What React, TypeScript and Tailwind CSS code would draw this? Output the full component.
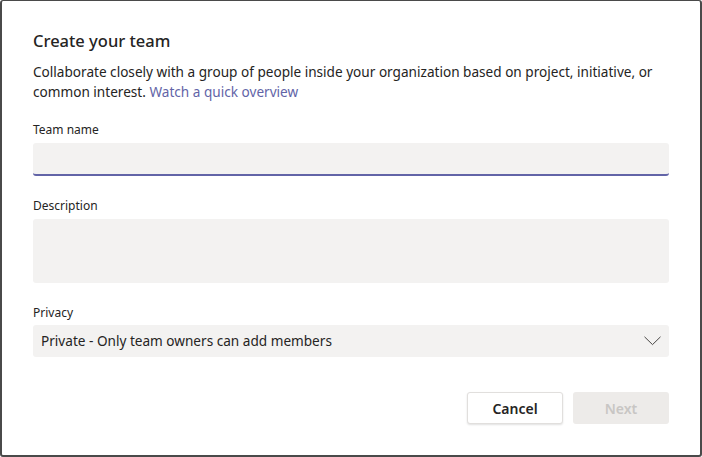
export default function App() {
  return (
    <div className="h-[457px] w-[702px] bg-white border-[#4a4a4a] border-t border-x-2 border-b-2 rounded-[3px] font-['Noto_Sans',sans-serif] text-[#252423]">
      <div className="px-[31px] pt-[27px]">
        <h1 className="text-[16.5px] font-medium leading-[26px]">Create your team</h1>
        <p className="mt-[8px] text-[13.6px] leading-[20px] text-[#252423]">
          Collaborate closely with a group of people inside your organization based on project, initiative, or
          common interest. <span className="text-[#6264a7]">Watch a quick overview</span>
        </p>

        <label className="block mt-[20px] text-[12px] leading-[16px] text-[#252423]">Team name</label>
        <div className="mt-[5px] h-[33px] rounded-[3px] bg-[#f3f2f1] border-b-2 border-[#6264a7]" />

        <label className="block mt-[22px] text-[12px] leading-[16px]">Description</label>
        <div className="mt-[5px] h-[64px] rounded-[3px] bg-[#f3f2f1]" />

        <label className="block mt-[22px] text-[12px] leading-[16px]">Privacy</label>
        <div className="mt-[4px] h-[32px] rounded-[3px] bg-[#f3f2f1] flex items-center justify-between pl-[8px] pr-[8px]">
          <span className="text-[13.6px]">Private - Only team owners can add members</span>
          <svg width="17" height="10" viewBox="0 0 17 10" fill="none" className="text-[#484644]">
            <polyline points="0.5,0.8 8.5,8.6 16.5,0.8" stroke="currentColor" strokeWidth="1" />
          </svg>
        </div>

        <div className="mt-[35px] flex justify-end gap-[10px]">
          <button className="w-[96px] h-[32px] rounded-[3px] border border-[#e1dfdd] bg-white shadow-[0_1px_2px_rgba(0,0,0,0.12)] text-[14px] font-semibold">
            Cancel
          </button>
          <button className="w-[96px] h-[32px] rounded-[3px] bg-[#edebe9] text-[14px] font-semibold text-[#c8c6c4]">
            Next
          </button>
        </div>
      </div>
    </div>
  );
}
